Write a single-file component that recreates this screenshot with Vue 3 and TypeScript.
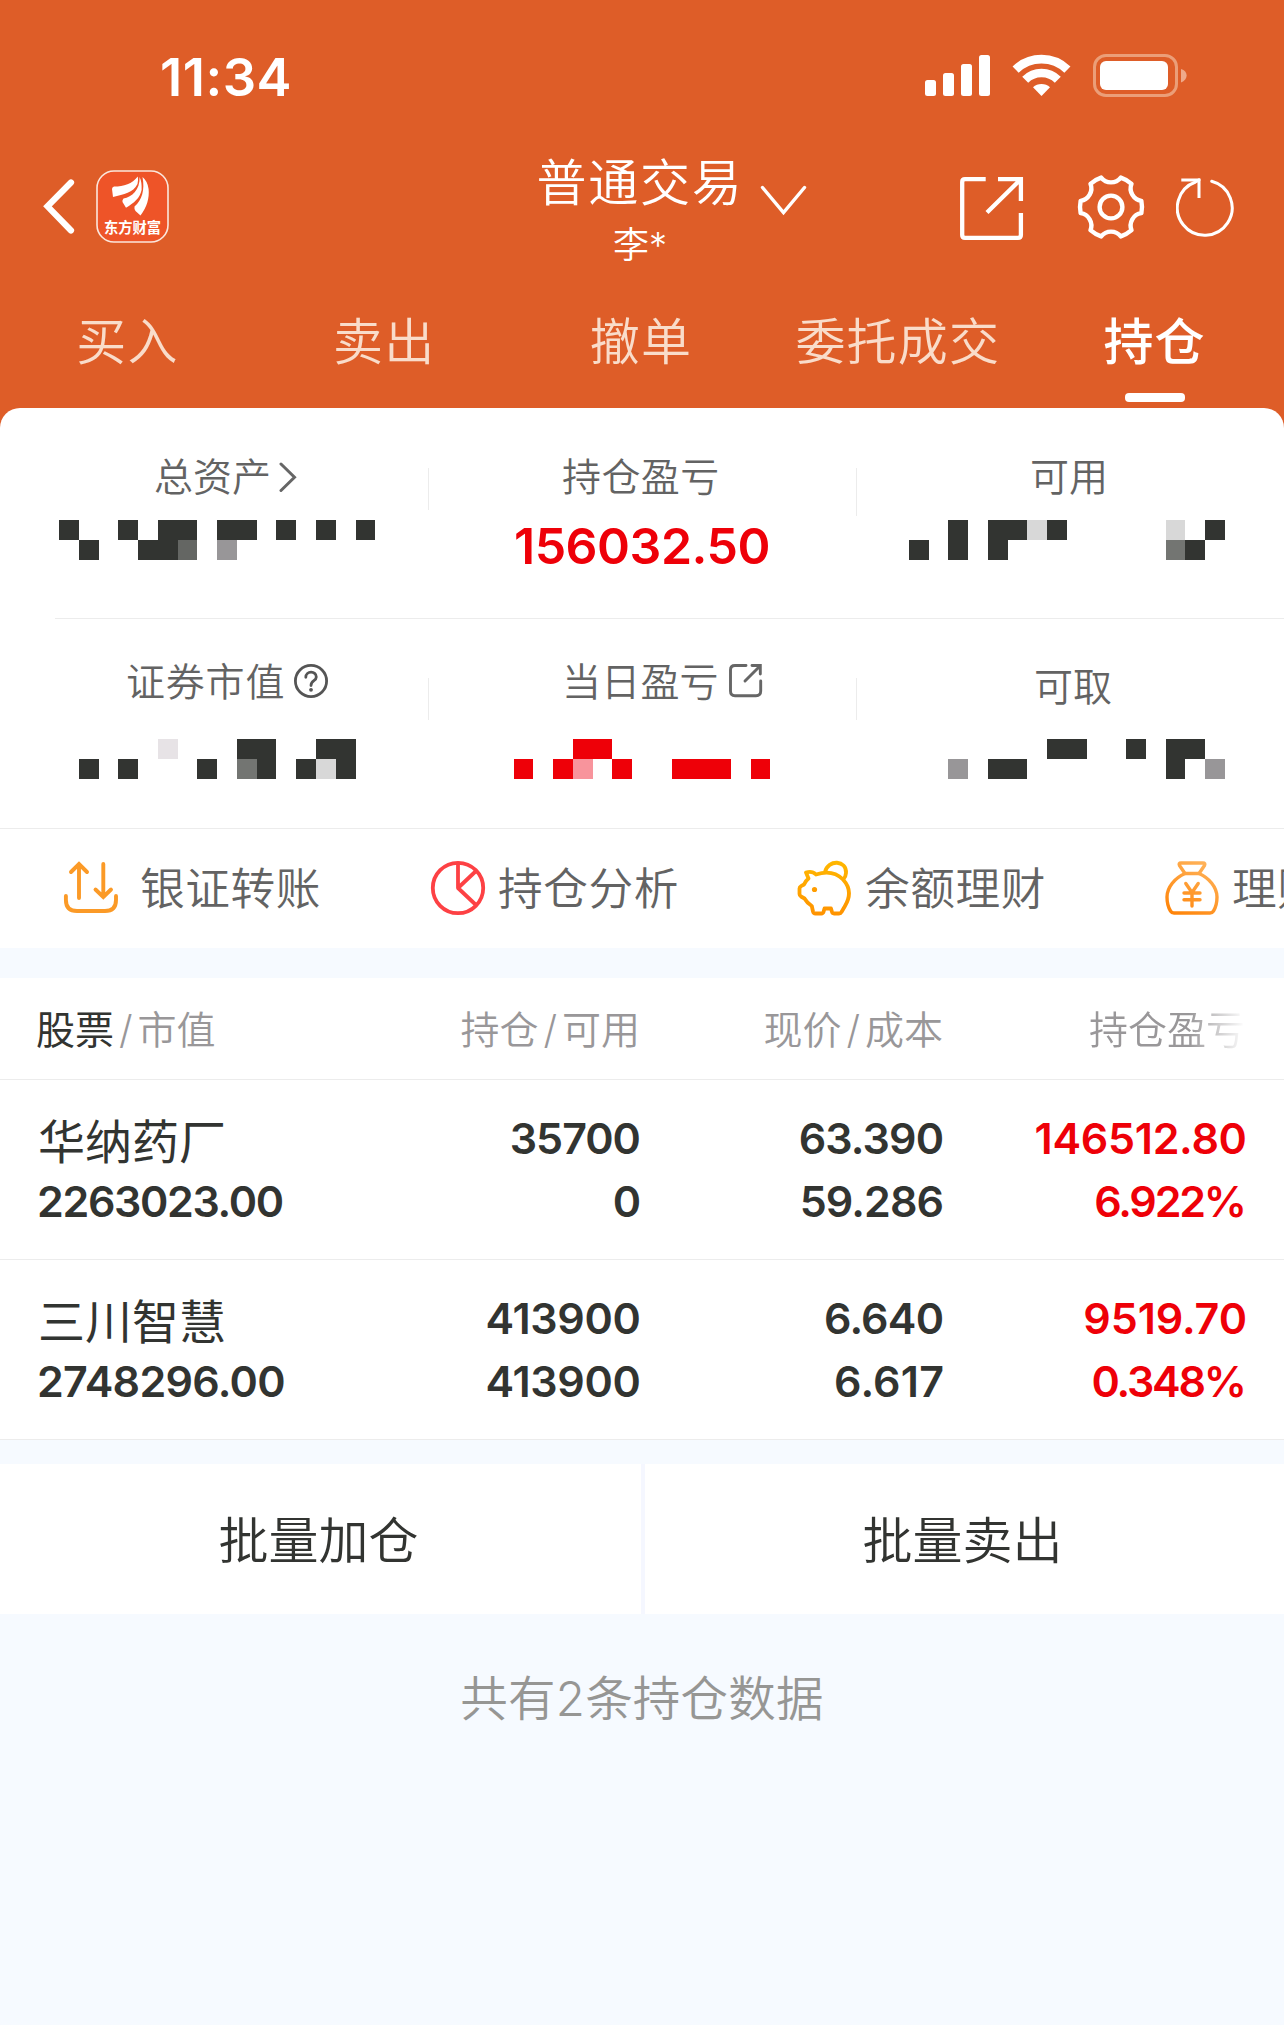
<script setup lang="ts">
interface Tab { label: string; active?: boolean }
// Figure text together with its tracking in px.
type Figure = [text: string, tracking: number]
interface Holding {
  name: string
  value: Figure
  columns: { figures: [Figure, Figure]; up?: boolean }[]
}

const tabs: Tab[] = [
  { label: '买入' },
  { label: '卖出' },
  { label: '撤单' },
  { label: '委托成交' },
  { label: '持仓', active: true },
]

const holdings: Holding[] = [
  {
    name: '华纳药厂',
    value: ['2263023.00', -1.35],
    columns: [
      { figures: [['35700', -1], ['0', 0]] },
      { figures: [['63.390', -0.9], ['59.286', -0.9]] },
      { figures: [['146512.80', -0.3], ['6.922%', -2.2]], up: true },
    ],
  },
  {
    name: '三川智慧',
    value: ['2748296.00', -0.7],
    columns: [
      { figures: [['413900', -0.3], ['413900', -0.3]] },
      { figures: [['6.640', -0.8], ['6.617', 0.2]] },
      { figures: [['9519.70', -0.1], ['0.348%', -2.2]], up: true },
    ],
  },
]

const track = (f: Figure) => ({ letterSpacing: `${f[1]}px`, marginRight: `${-f[1]}px` })

// Hidden amounts are shown as blocks; each character is one block of the privacy grid.
const shades: Record<string, string> = {
  '#': '#323431',
  m: '#646663',
  g: '#737572',
  l: '#989698',
  w: '#d8d8d8',
  p: '#e7e3e6',
  r: '#ee0008',
  k: '#f8949c',
}
const gridX = (i: number) => Math.round(59.1 + i * 19.76)

function blocks(start: number, rows: string[]) {
  return rows.flatMap((row, y) =>
    [...row].flatMap((c, i) =>
      c === '.'
        ? []
        : [{ x: gridX(start + i), y: y * 20, w: gridX(start + i + 1) - gridX(start + i), fill: shades[c] }],
    ),
  )
}

const masks = {
  total: blocks(0, ['#..#.##.##.#.#.#', '.#..##m.l']),
  usable: blocks(43, ['..#.##w#.....w.#', '#.#.#........g#']),
  market: blocks(0, ['.....p...##..##', '.#.#...#.g#.#w#']),
  today: blocks(23, ['...rr', 'r.rk.r..rrr.r']),
  cash: blocks(43, ['.......##..#.##', '..l.##.......#.l']),
}

// Six-toothed gear: short outer edges joined by concave arcs.
const gearPath = (() => {
  const at = (deg: number) => {
    const a = (deg * Math.PI) / 180
    return `${(34 + 31 * Math.cos(a)).toFixed(2)} ${(34 + 31 * Math.sin(a)).toFixed(2)}`
  }
  let d = ''
  for (let i = 0; i < 6; i++) {
    const c = i * 60
    d += i === 0 ? `M${at(c - 11.5)}` : `A12.5 12.5 0 0 0 ${at(c - 11.5)}`
    d += `A31 31 0 0 1 ${at(c + 11.5)}`
  }
  return `${d}A12.5 12.5 0 0 0 ${at(-11.5)}Z`
})()
</script>

<template>
  <div class="page">
    <header class="top">
      <div class="status">
        <span class="time">11:34</span>
        <svg class="status-icons" width="264" height="44" viewBox="924 54 264 44" fill="none">
          <g fill="#fff">
            <rect x="925" y="80" width="11" height="16" rx="2.5" />
            <rect x="943" y="73" width="11" height="23" rx="2.5" />
            <rect x="961" y="64" width="11" height="32" rx="2.5" />
            <rect x="979" y="55" width="11" height="41" rx="2.5" />
            <path d="M1041.5 96 L1033 87.3 A12.6 12.6 0 0 1 1050 87.3 Z" />
          </g>
          <path d="M1015.6 69.6 A37.3 37.3 0 0 1 1067.4 69.6" stroke="#fff" stroke-width="8.8" />
          <path d="M1025.2 79.7 A23 23 0 0 1 1057.8 79.7" stroke="#fff" stroke-width="8.4" />
          <rect x="1094.5" y="55.5" width="82" height="40" rx="11.5" stroke="#eb9e78" stroke-width="3" />
          <rect x="1100" y="61" width="68" height="29" rx="6" fill="#fff" />
          <path d="M1181 69 C1188.5 71 1188.5 80 1181 82.5 Z" fill="#efa98a" />
        </svg>
      </div>

      <div class="nav">
        <svg class="back" width="34" height="58" viewBox="42 177 34 58" fill="none">
          <path d="M71 182.500 L47.500 206.300 L71 230.500" stroke="#fff" stroke-width="6.200" stroke-linecap="round" stroke-linejoin="miter" />
        </svg>
        <svg class="logo" width="73" height="73" viewBox="0 0 73 73">
          <rect x="1" y="1" width="71" height="71" rx="17" fill="#ee5428" stroke="#fbe6dc" stroke-width="1.600" />
          <g fill="#fff">
            <path d="M41.800 6.500 C36 14 28 16.500 18 16.500 Q16 17 16 19 L17 27 C28 24 37 23 41.500 14 Q42.500 10 41.800 6.500 Z" />
            <path d="M43.600 7 C44 20 36 27 27.500 28.500 Q26 30 26.500 32 L30 37.800 C38 33 44 28 45.600 20 Q46 12 43.600 7 Z" />
            <path d="M46.500 7 C49 20 46 30 38.500 36.500 Q38 39 39.500 41 L44.500 45.600 C51 37 53.500 28 52.600 19 Q51.500 11 46.500 7 Z" />
          </g>
          <text class="logo-text" x="36.500" y="62.500" text-anchor="middle">东方财富</text>
        </svg>
        <div class="title">
          <div class="title-main">普通交易</div>
          <div class="title-sub">李*</div>
        </div>
        <svg class="drop" width="50" height="32" viewBox="758 184 50 32" fill="none">
          <path d="M762.500 187.500 L783.500 212.500 L804.500 187.500" stroke="#fff" stroke-width="3.400" stroke-linecap="round" />
        </svg>
        <svg class="share" width="64" height="64" viewBox="960 177 64 64" fill="none" stroke="#fff" stroke-width="4.300">
          <path d="M985.700 179.200 H965 Q962.200 179.200 962.200 182 V235 Q962.200 237.800 965 237.800 H1018 Q1020.900 237.800 1020.900 235 V213" />
          <path d="M998 179.200 H1020.900 V201 M1020.500 179.500 L987 212.500" />
        </svg>
        <svg class="gear" width="68" height="68" viewBox="0 0 68 68" fill="none" stroke="#fff" stroke-width="4.400">
          <path :d="gearPath" stroke-linejoin="round" />
          <circle cx="34" cy="34" r="11.400" />
        </svg>
        <svg class="refresh" width="60" height="62" viewBox="1176 176 60 62" fill="none" stroke="#fff" stroke-width="3">
          <path d="M1211.700 181.300 A27.400 27.400 0 1 1 1195.500 182 L1199 179.900" stroke-linecap="round" />
          <path d="M1181.300 180 H1199 V198" />
        </svg>
      </div>

      <nav class="tabs">
        <div v-for="tab in tabs" :key="tab.label" class="tab" :class="{ active: tab.active }">{{ tab.label }}</div>
      </nav>
    </header>

    <div class="card-wrap">
      <section class="card">
        <div class="sum-row first">
          <div class="cell c1">
            <div class="label">
              <span>总资产</span>
              <svg class="i-more" width="18" height="32" viewBox="0 0 18 32" fill="none">
                <path d="M2 3 L15.500 16.300 L2 29.500" stroke="#666" stroke-width="3" stroke-linecap="round" />
              </svg>
            </div>
            <svg class="mask" width="428" height="40" viewBox="0 0 428 40" shape-rendering="crispEdges">
              <rect v-for="(b, i) in masks.total" :key="i" :x="b.x" :y="b.y" :width="b.w" height="20" :fill="b.fill" />
            </svg>
            <i class="sep"></i>
          </div>
          <div class="cell c2">
            <div class="label"><span>持仓盈亏</span></div>
            <div class="profit">156032.50</div>
            <i class="sep tall"></i>
          </div>
          <div class="cell c3">
            <div class="label"><span>可用</span></div>
            <svg class="mask" width="428" height="40" viewBox="856 0 428 40" shape-rendering="crispEdges">
              <rect v-for="(b, i) in masks.usable" :key="i" :x="b.x" :y="b.y" :width="b.w" height="20" :fill="b.fill" />
            </svg>
          </div>
        </div>
        <div class="sum-row second">
          <div class="cell c4">
            <div class="label">
              <span>证券市值</span>
              <svg class="i-help" width="36" height="36" viewBox="0 0 36 36" fill="none" stroke="#555" stroke-width="2.800">
                <circle cx="18" cy="18" r="15.600" />
                <path d="M12.800 14.300 C12.800 7.500 23.300 7.500 23.300 14 C23.300 18 18 17.500 18 22.500" stroke-linecap="round" />
                <circle cx="18" cy="26.800" r="1.900" fill="#555" stroke="none" />
              </svg>
            </div>
            <svg class="mask" width="428" height="40" viewBox="0 0 428 40" shape-rendering="crispEdges">
              <rect v-for="(b, i) in masks.market" :key="i" :x="b.x" :y="b.y" :width="b.w" height="20" :fill="b.fill" />
            </svg>
            <i class="sep"></i>
          </div>
          <div class="cell c5">
            <div class="label">
              <span>当日盈亏</span>
              <svg class="i-link" width="36" height="36" viewBox="0 0 36 36" fill="none" stroke="#666" stroke-width="2.900" stroke-linecap="round">
                <path d="M18 2.500 H7 Q2.500 2.500 2.500 7 V28 Q2.500 32.700 7 32.700 H28 Q32.700 32.700 32.700 28 V18" />
                <path d="M24 2.500 H32.300 V11 M32 3 L17 18" />
              </svg>
            </div>
            <svg class="mask" width="428" height="40" viewBox="428 0 428 40" shape-rendering="crispEdges">
              <rect v-for="(b, i) in masks.today" :key="i" :x="b.x" :y="b.y" :width="b.w" height="20" :fill="b.fill" />
            </svg>
            <i class="sep"></i>
          </div>
          <div class="cell c6">
            <div class="label"><span>可取</span></div>
            <svg class="mask" width="428" height="40" viewBox="856 0 428 40" shape-rendering="crispEdges">
              <rect v-for="(b, i) in masks.cash" :key="i" :x="b.x" :y="b.y" :width="b.w" height="20" :fill="b.fill" />
            </svg>
          </div>
        </div>

        <div class="actions">
          <div class="action a1">
            <svg width="56" height="56" viewBox="63 860 56 56" fill="none" stroke="#fb9a27" stroke-width="3.900" stroke-linecap="round">
              <path d="M79 898 V864 M71 872 L79 864 L87 872" />
              <path d="M103.300 864 V897 M95.500 889.500 L103.300 897 L111 889.500" />
              <path d="M65.900 896 V900 Q65.900 911 77 911 H105 Q116 911 116 900 V896" />
            </svg>
            <span>银证转账</span>
          </div>
          <div class="action a2">
            <svg width="56" height="56" viewBox="430 860 56 56" fill="none" stroke="#fd4144" stroke-width="3.800">
              <circle cx="458" cy="888" r="25.200" />
              <path d="M458 863 V888 L476 871 M458 888 L476 905" stroke-linejoin="round" />
            </svg>
            <span>持仓分析</span>
          </div>
          <div class="action a3">
            <svg width="56" height="56" viewBox="0 0 56 56" fill="none" stroke="url(#pig)" stroke-width="3.800" stroke-linejoin="round">
              <defs>
                <linearGradient id="pig" x1="0" y1="0" x2="0" y2="56" gradientUnits="userSpaceOnUse">
                  <stop offset="0" stop-color="#ffb800" />
                  <stop offset="1" stop-color="#ff9200" />
                </linearGradient>
              </defs>
              <path d="M9 12.500 Q15 10.500 19 14.500 C31 10.500 40 13.500 46 19.500 C53 27 54 36 48 46 L44.500 52 Q43.800 53.500 42 53.500 H37 Q35.300 53.500 35 52 L34 48.500 H27.500 L26.500 52 Q26 53.500 24.500 53.500 H18.500 Q16.500 53.500 16 51.500 L14.800 46 C11 43.500 9.500 42 7.500 38.500 L4 36.500 Q2.500 35.500 2.500 34 V28.500 Q2.500 27 4 26.200 L7 24.500 C8 22 9 20.500 11.500 18.500 Z" />
              <path d="M28 12 C31 -1 50 0 49 13 Q48.700 17 46.500 19" />
              <circle cx="17.500" cy="29.500" r="2.600" fill="#ff9d00" stroke="none" />
            </svg>
            <span>余额理财</span>
          </div>
          <div class="action a4">
            <svg width="56" height="56" viewBox="0 0 56 56" fill="none" stroke="url(#bag)" stroke-width="3.400" stroke-linejoin="round" stroke-linecap="round">
              <defs>
                <linearGradient id="bag" x1="40" y1="0" x2="8" y2="56" gradientUnits="userSpaceOnUse">
                  <stop offset="0" stop-color="#ffb35a" />
                  <stop offset="1" stop-color="#ff8205" />
                </linearGradient>
              </defs>
              <path d="M21 13.500 L15.500 5.500 Q14.300 3 17 3 H39 Q41.700 3 40.500 5.500 L35 13.500 Z" />
              <path d="M21 13.500 C11 18 3 27 3 37 C3 43 4 47 6.500 51 Q7.800 53 10 53 H46 Q48.200 53 49.500 51 C52 47 53 43 53 37 C53 27 45 18 35 13.500" />
              <path d="M21.800 23.500 L28 32.500 L34.200 23.500 M28 32.500 V46 M20 33 H36 M20 39.800 H36" />
            </svg>
            <span>理财</span>
          </div>
        </div>
      </section>
    </div>

    <section class="table">
      <div class="thead">
        <div class="h1"><b>股票</b><em>/</em>市值</div>
        <div class="h2">持仓<em>/</em>可用</div>
        <div class="h3">现价<em>/</em>成本</div>
        <div class="h4"><span>持仓盈亏</span></div>
      </div>
      <div v-for="h in holdings" :key="h.name" class="trow">
        <div class="col1">
          <span class="name">{{ h.name }}</span>
          <span :style="track(h.value)">{{ h.value[0] }}</span>
        </div>
        <div v-for="(col, i) in h.columns" :key="i" :class="{ up: col.up }">
          <span v-for="(f, j) in col.figures" :key="j" :style="track(f)">{{ f[0] }}</span>
        </div>
      </div>
    </section>

    <div class="batch">
      <div class="b-left">批量加仓</div>
      <div class="b-right">批量卖出</div>
    </div>
    <p class="foot">共有<span>2</span>条持仓数据</p>
  </div>
</template>

<style>
body {
  margin: 0;
}
</style>

<style scoped>
.page {
  width: 1284px;
  height: 2025px;
  overflow: hidden;
  background: #f6faff;
  font-family: Inter, 'Noto Sans CJK SC DemiLight', 'Noto Sans CJK SC', sans-serif;
  font-weight: 350;
  color: #323431;
}
svg {
  display: block;
  flex: none;
}
.top {
  height: 408px;
  background: #de5d28;
  color: #fff;
}
.status {
  display: flex;
  height: 130px;
  padding: 47px 0 0 160px;
  box-sizing: border-box;
}
.time {
  width: 764px;
  line-height: 60px;
  font-size: 52.5px;
  font-weight: 600;
  letter-spacing: 0.5px;
}
.status-icons {
  margin-top: 7px;
}
.nav {
  display: flex;
  align-items: flex-start;
  height: 150px;
}
.back {
  margin: 47px 20px 0 42px;
}
.logo {
  margin-top: 40px;
}
.logo-text {
  font: 700 14.3px 'Noto Sans CJK SC', sans-serif;
  fill: #fff;
}
.title {
  width: 210px;
  margin: 23px 0 0 366px;
  text-align: center;
}
.title-main {
  font-size: 50px;
  line-height: 60px;
  letter-spacing: 1.8px;
  white-space: nowrap;
}
.title-sub {
  font-size: 36px;
  line-height: 44px;
  margin-top: 10px;
}
.drop {
  margin: 54px 0 0 13px;
}
.share {
  margin: 47px 0 0 152px;
}
.gear {
  margin: 43px 0 0 53px;
}
.refresh {
  margin: 46px 0 0 31px;
}
.tabs {
  display: grid;
  grid-template-columns: repeat(5, 1fr);
}
.tab {
  position: relative;
  height: 128px;
  padding: 31px 2px 0 0;
  box-sizing: border-box;
  text-align: center;
  font-size: 50px;
  line-height: 62px;
  letter-spacing: 1.2px;
  color: #f9dcca;
}
.tab.active {
  color: #fff;
  font-family: Inter, 'Noto Sans CJK SC', sans-serif;
  font-weight: 500;
}
.tab.active::after {
  content: '';
  position: absolute;
  left: 98px;
  top: 113px;
  width: 60px;
  height: 9px;
  border-radius: 4px;
  background: #fff;
}
.card-wrap {
  background: #de5d28;
}
.card {
  background: #fff;
  border-radius: 20px 20px 0 0;
  height: 540px;
}
.sum-row {
  display: grid;
  grid-template-columns: 428px 428px 428px;
  position: relative;
}
.sum-row.first {
  height: 211px;
}
.sum-row.first::after {
  content: '';
  position: absolute;
  left: 55px;
  right: 0;
  bottom: 0;
  height: 1px;
  background: #ececec;
}
.sum-row.second {
  height: 209px;
  border-bottom: 1px solid #ececec;
}
.cell {
  position: relative;
  padding-top: 44px;
}
.label {
  display: flex;
  align-items: center;
  height: 48px;
  font-size: 39px;
  line-height: 48px;
  color: #636363;
  white-space: nowrap;
}
.label span {
  padding-top: 1px;
}
.second .label {
  margin-top: -6px;
}
.mask {
  margin-top: 20px;
}
.second .mask {
  margin-top: 34px;
}
.sep {
  position: absolute;
  right: -1px;
  top: 60px;
  width: 1px;
  height: 42px;
  background: #ececec;
}
.sep.tall {
  height: 48px;
}
.second .sep {
  top: 59px;
}
.c1 .label {
  padding-left: 154px;
}
.c2 .label {
  padding-left: 134px;
  letter-spacing: 0.4px;
}
.c3 .label {
  padding-left: 174px;
}
.c4 .label {
  padding-left: 126px;
  letter-spacing: 0.8px;
}
.c5 .label {
  padding-left: 134px;
  letter-spacing: 0.2px;
}
.c6 .label {
  padding-left: 178px;
  position: relative;
  top: 5px;
}
.i-more {
  margin: 2px 0 0 8px;
}
.i-help {
  margin-left: 8px;
}
.i-link {
  margin-left: 9px;
}
.profit {
  margin-top: 16px;
  text-align: center;
  font-size: 50px;
  line-height: 60px;
  font-weight: 600;
  letter-spacing: -0.5px;
  color: #ee0008;
}
.actions {
  display: flex;
  height: 119px;
  padding-top: 31px;
  box-sizing: border-box;
  overflow: hidden;
}
.action {
  display: flex;
  flex: none;
  width: 367px;
  font-size: 44.700px;
  line-height: 58px;
  letter-spacing: 0.6px;
  color: #636363;
  white-space: nowrap;
}
.a1 {
  margin-left: 63px;
}
.a1 span {
  margin-left: 21px;
}
.action + .action span {
  margin-left: 12px;
}
.table {
  margin-top: 30px;
  background: #fff;
}
.thead {
  display: grid;
  grid-template-columns: 340px 300px 303px 302px;
  height: 102px;
  box-sizing: border-box;
  border-bottom: 1px solid #ececec;
  padding-top: 27px;
  font-size: 39px;
  line-height: 50px;
  color: #999799;
  text-align: right;
}
.thead b {
  font-family: 'Noto Sans CJK SC', sans-serif;
  font-weight: 400;
  line-height: 1;
  color: #323431;
}
.thead em {
  font-style: normal;
  padding: 0 5px;
}
.h1 {
  text-align: left;
  padding-left: 36px;
}
.h4 span {
  -webkit-mask-image: linear-gradient(90deg, #000 64%, transparent 100%);
  mask-image: linear-gradient(90deg, #000 64%, transparent 100%);
}
.trow {
  display: grid;
  grid-template-columns: 340px 301px 303px 303px;
  height: 180px;
  box-sizing: border-box;
  padding-top: 27px;
  border-bottom: 1px solid #ececec;
  font-size: 43px;
  font-weight: 600;
  line-height: 62.600px;
  text-align: right;
}
.trow span {
  display: block;
}
.trow .col1 {
  text-align: left;
  padding-left: 37px;
}
.trow .name {
  font-family: Inter, 'Noto Sans CJK SC', sans-serif;
  font-size: 47px;
  font-weight: 400;
  position: relative;
  top: 4px;
  left: 1px;
}
.up {
  color: #ee0008;
}
.batch {
  display: grid;
  grid-template-columns: 641px 639px;
  column-gap: 4px;
  margin-top: 24px;
  height: 150px;
  font-size: 50px;
  line-height: 155px;
  text-align: center;
  background: #f5f7ff;
}
.b-left,
.b-right {
  background: #fff;
  height: 150px;
  padding-right: 4px;
}
.foot {
  margin: 57px 0 0;
  text-align: center;
  font-size: 47.500px;
  line-height: 56px;
  letter-spacing: 0.2px;
  color: #969694;
}
</style>
